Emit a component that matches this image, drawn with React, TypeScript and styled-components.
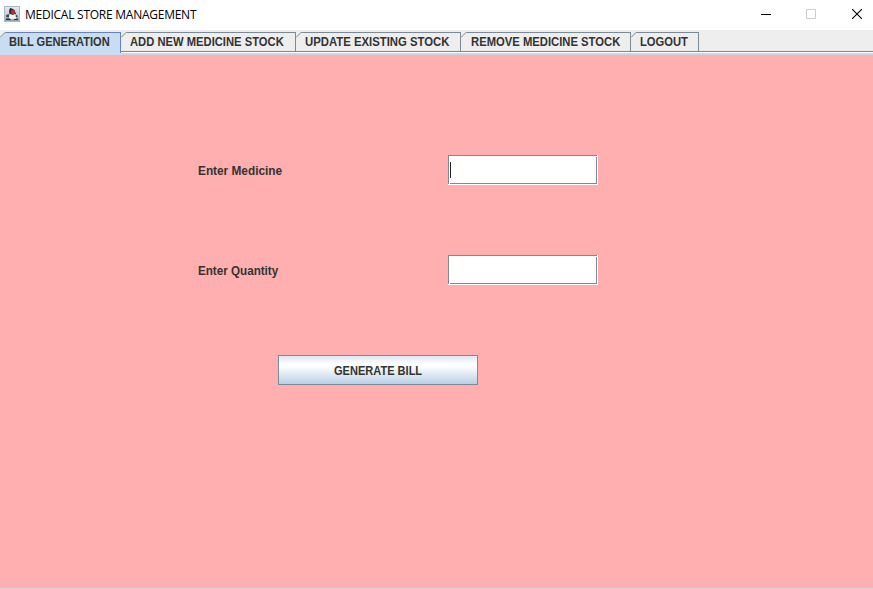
import React from 'react';
import styled, { createGlobalStyle } from 'styled-components';

const Global = createGlobalStyle`
  * { box-sizing: border-box; }
  html, body { margin: 0; padding: 0; overflow: hidden; }
`;

const Window = styled.div`
  width: 873px;
  height: 589px;
  display: flex;
  flex-direction: column;
  background: #fff;
  color: #333;
  font: bold 12px/14px 'Liberation Sans', Arial, sans-serif;
`;

const TitleBar = styled.header`
  flex: none;
  height: 30px;
  display: flex;
  align-items: center;
  padding: 0 0 2px 4px;
  background: #fff;
`;

const Title = styled.h1`
  flex: 1;
  margin: 1px 0 0 5px;
  color: #000;
  font: 400 12px/16px 'Open Sans', 'Noto Sans', sans-serif;
  letter-spacing: -0.25px;
  white-space: nowrap;
`;

const Controls = styled.div`
  display: flex;
  height: 28px;
  margin-right: -7px;
`;

const ControlButton = styled.button`
  width: 46px;
  height: 28px;
  padding: 0;
  border: 0;
  background: none;
  display: flex;
  align-items: center;
  justify-content: center;

  &:first-child { width: 45px; }
`;

const TabStrip = styled.nav`
  flex: none;
  height: 25px;
  display: flex;
  align-items: flex-start;
  padding-top: 2px;
  background: linear-gradient(
    #eee 0 21px, #6f86b0 21px 22px, #fff 22px 23px, #c8d6e8 23px 25px
  );
`;

const Tab = styled.button<{ $width: number; $inset?: number; $active?: boolean }>`
  flex: none;
  position: relative;
  display: flex;
  align-items: flex-start;
  width: ${p => p.$width}px;
  height: ${p => (p.$active ? 21 : 19)}px;
  padding: 2px 0 0 ${p => p.$inset ?? 9}px;
  border: 0;
  border-top: 1px solid ${p => (p.$active ? '#6382bf' : '#7a8a99')};
  border-right: 1px solid ${p => (p.$active ? '#6382bf' : '#7a8a99')};
  background: ${p => (p.$active ? '#c8ddf2' : '#eee')};
  box-shadow: ${p => (p.$active ? '0 2px #c8ddf2' : 'none')};
  color: #333;
  font: inherit;
`;

const Slant = styled.svg`
  position: absolute;
  left: 0;
  top: -1px;
`;

const Label = styled.span<{ $stretch: number }>`
  display: block;
  transform: scaleX(${p => p.$stretch});
  transform-origin: left;
  white-space: nowrap;
`;

const Panel = styled.main`
  flex: 1;
  display: flex;
  flex-direction: column;
  padding: 100px 0 0 198px;
  background: #ffafaf;
  border-bottom: 1px solid #dcd2df;
`;

const Field = styled.label`
  display: grid;
  grid-template-columns: 250px 150px;
  height: 30px;
  margin-bottom: 70px;
`;

const Caption = styled.span`
  padding-top: 9px;
`;

const InputBox = styled.span`
  display: flex;
  width: 150px;
  height: 30px;
  background: #fff;
  padding: 0 1px 1px 0;
`;

const Input = styled.span`
  display: flex;
  align-items: center;
  flex: 1;
  padding-left: 2px;
  background:
    linear-gradient(#7a8a99, #7a8a99) 0 0 / 100% 1px no-repeat,
    linear-gradient(#7a8a99, #7a8a99) 0 0 / 1px 100% no-repeat,
    linear-gradient(#7a8a99, #7a8a99) 2px 100% / 147px 1px no-repeat,
    linear-gradient(#7a8a99, #7a8a99) 100% 2px / 1px 27px no-repeat;
`;

const Caret = styled.i`
  width: 1px;
  height: 16px;
  background: #222;
`;

const Submit = styled.button`
  width: 200px;
  height: 30px;
  margin-left: 80px;
  padding: 8px 0 0 55px;
  display: flex;
  align-items: flex-start;
  border: 1px solid #7a8a99;
  background: linear-gradient(#dde8f3 0%, #fff 30%, #fff 36%, #b8cfe5 100%);
  color: #333;
  font: inherit;
`;

const tabs = [
  { text: 'BILL GENERATION', width: 121, stretch: 0.925, active: true },
  { text: 'ADD NEW MEDICINE STOCK', width: 175, stretch: 0.935 },
  { text: 'UPDATE EXISTING STOCK', width: 165, stretch: 0.945 },
  { text: 'REMOVE MEDICINE STOCK', width: 170, stretch: 0.938, inset: 10 },
  { text: 'LOGOUT', width: 68, stretch: 0.934 },
];

const JavaIcon = () => (
  <svg width="16" height="16" viewBox="0 0 16 16">
    <defs>
      <linearGradient id="sky" x2="0" y2="1">
        <stop stopColor="#e4ebf2" />
        <stop offset="0.6" stopColor="#c3d0dd" />
        <stop offset="1" stopColor="#7e98b1" />
      </linearGradient>
    </defs>
    <path fill="url(#sky)" d="M0 0h16v16H0z" />
    <path fill="none" stroke="#a9b7c5" d="M.5.5h15v15H.5z" />
    <path fill="#25292e" d="M6 2l2 .5L10.500 4l1.500 4-3 1-3.500-1-.5-3z" />
    <path fill="#4a5057" d="M2 9l3-1 1 1.500-1.500 2L2 11zM11 8l2.500 1.500V11l-2 .5z" />
    <path fill="#f6f6f4" d="M5.500 8l3 1 3-1 .5 5-1.500.5-2-1-2 1-1.500-1z" />
    <path fill="#30343a" d="M2 12.500h4l1 1.500H2zM10 13l4-.5V14h-4z" />
    <path fill="#c82c26" d="M7 4.500L9.500 4l1.500 2-.5 2-2 .5L7 7z" />
  </svg>
);

export default function App() {
  return (
    <Window>
      <Global />
      <TitleBar>
        <JavaIcon />
        <Title>MEDICAL STORE MANAGEMENT</Title>
        <Controls>
          <ControlButton aria-label="Minimize">
            <svg width="10" height="10"><path fill="#000" d="M0 5h10v1H0z" /></svg>
          </ControlButton>
          <ControlButton aria-label="Maximize">
            <svg width="10" height="10"><path fill="none" stroke="#ccc" d="M.5.5h9v9h-9z" /></svg>
          </ControlButton>
          <ControlButton aria-label="Close">
            <svg width="10" height="10"><path stroke="#000" strokeWidth="1.1" d="M0 0l10 10M10 0L0 10" /></svg>
          </ControlButton>
        </Controls>
      </TitleBar>
      <TabStrip>
        {tabs.map(t => (
          <Tab key={t.text} $width={t.width} $inset={t.inset} $active={t.active}>
            <Slant width="6" height="6">
              <path fill="#eee" d="M0 0h6L0 6z" />
              <path fill="none" stroke="#7a8a99" d="M0 5.5L5.5 0" />
            </Slant>
            <Label $stretch={t.stretch}>{t.text}</Label>
          </Tab>
        ))}
      </TabStrip>
      <Panel>
        <Field>
          <Caption><Label $stretch={0.985}>Enter Medicine</Label></Caption>
          <InputBox><Input><Caret /></Input></InputBox>
        </Field>
        <Field>
          <Caption><Label $stretch={0.97}>Enter Quantity</Label></Caption>
          <InputBox><Input /></InputBox>
        </Field>
        <Submit><Label $stretch={0.92}>GENERATE BILL</Label></Submit>
      </Panel>
    </Window>
  );
}
